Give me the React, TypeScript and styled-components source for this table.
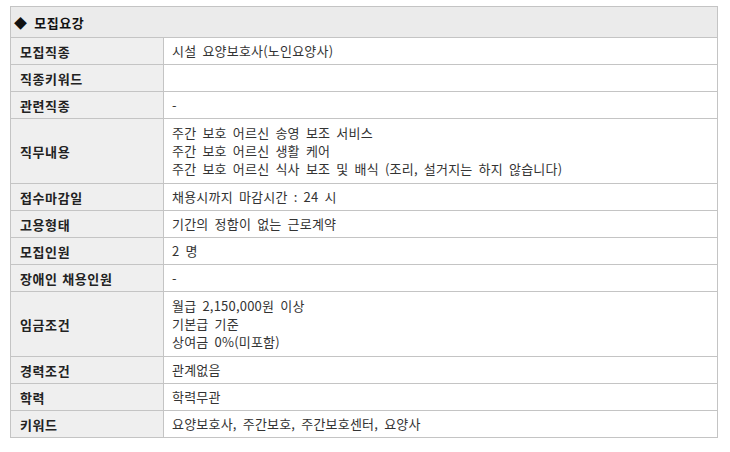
import React from 'react';
import styled, { createGlobalStyle } from 'styled-components';

interface InfoRow {
  label: string;
  lines: string[];
}

const rows: InfoRow[] = [
  { label: '모집직종', lines: ['시설 요양보호사(노인요양사)'] },
  { label: '직종키워드', lines: [''] },
  { label: '관련직종', lines: ['-'] },
  {
    label: '직무내용',
    lines: [
      '주간 보호 어르신 송영 보조 서비스',
      '주간 보호 어르신 생활 케어',
      '주간 보호 어르신 식사 보조 및 배식 (조리, 설거지는 하지 않습니다)',
    ],
  },
  { label: '접수마감일', lines: ['채용시까지 마감시간 : 24 시'] },
  { label: '고용형태', lines: ['기간의 정함이 없는 근로계약'] },
  { label: '모집인원', lines: ['2 명'] },
  { label: '장애인 채용인원', lines: ['-'] },
  {
    label: '임금조건',
    lines: ['월급 2,150,000원 이상', '기본급 기준', '상여금 0%(미포함)'],
  },
  { label: '경력조건', lines: ['관계없음'] },
  { label: '학력', lines: ['학력무관'] },
  { label: '키워드', lines: ['요양보호사, 주간보호, 주간보호센터, 요양사'] },
];

const GlobalStyle = createGlobalStyle`
  body {
    margin: 0;
    padding: 6px 10px;
    background: #fff;
    font-family: "Noto Sans CJK KR", "Noto Sans", sans-serif;
    font-size: 13px;
    letter-spacing: 0.2px;
    word-spacing: 3px;
    color: #333;
  }
`;

const Table = styled.table`
  width: 708px;
  border-collapse: collapse;
  border: 1px solid #c4c4c4;
  table-layout: fixed;
`;

const LabelCol = styled.col`
  width: 153px;
`;

const HeaderCell = styled.th`
  height: 30px;
  padding: 0 3px;
  background: #ebebeb;
  border: 1px solid #c4c4c4;
  text-align: left;
  font-size: 13px;
  font-weight: bold;
  letter-spacing: 0.6px;
  color: #111;
`;

const LabelCell = styled.th`
  padding: 0 9px;
  background: #efefef;
  border: 1px solid #c4c4c4;
  text-align: left;
  font-weight: bold;
  letter-spacing: 0.6px;
  word-spacing: 1px;
  color: #222;
  white-space: nowrap;
`;

const ValueCell = styled.td<{ $multi: boolean }>`
  padding: ${p => (p.$multi ? '5px 8px' : '4px 8px')};
  height: 18px;
  border: 1px solid #c4c4c4;
  line-height: 18px;
  color: #333;
`;

const Line = styled.div`
  white-space: nowrap;
`;

export default function App() {
  return (
    <>
      <GlobalStyle />
      <Table>
        <colgroup>
          <LabelCol />
          <col />
        </colgroup>
        <thead>
          <tr>
            <HeaderCell colSpan={2}>◆ 모집요강</HeaderCell>
          </tr>
        </thead>
        <tbody>
          {rows.map(row => (
            <tr key={row.label}>
              <LabelCell>{row.label}</LabelCell>
              <ValueCell $multi={row.lines.length > 1}>
                {row.lines.map((line, i) => (
                  <Line key={i}>{line || '\u00a0'}</Line>
                ))}
              </ValueCell>
            </tr>
          ))}
        </tbody>
      </Table>
    </>
  );
}
